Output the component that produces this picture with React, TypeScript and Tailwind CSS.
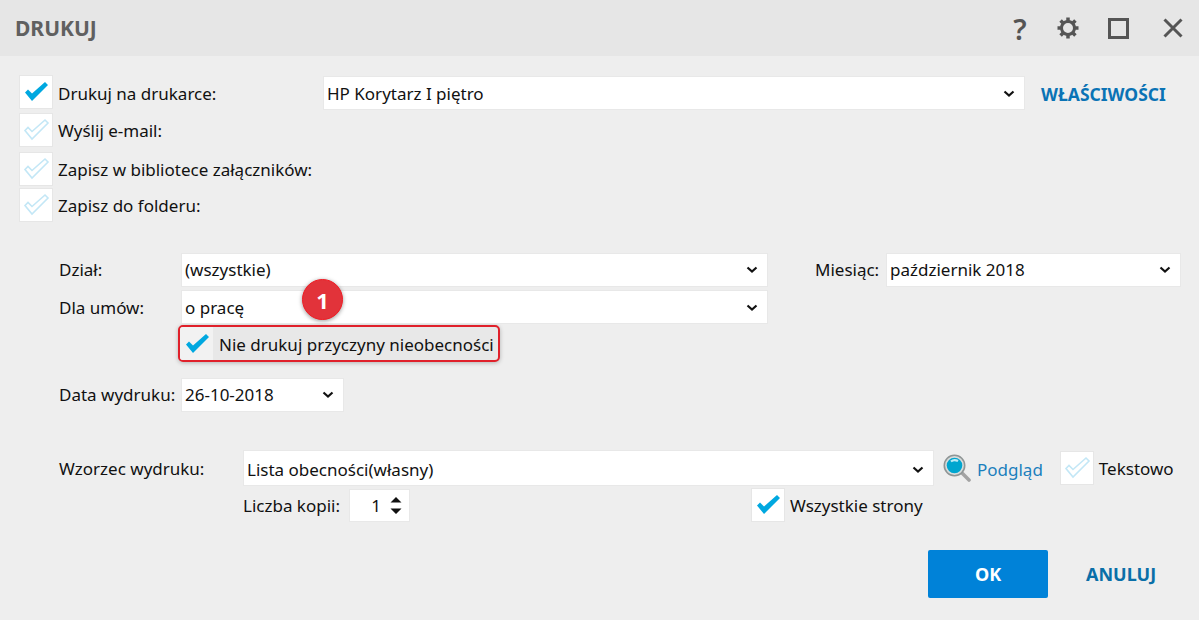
const font = "font-['Noto_Sans','Open_Sans',sans-serif]";

function Check({ on }: { on?: boolean }) {
  return (
    <svg width="32" height="32" viewBox="0 0 32 32">
      {on ? (
        <path d="M5 16.5 8 13.5 12 17.5 25 6 28 9 12 25Z" fill="#00a8e0" />
      ) : (
        <path d="M5 16.5 8 13.5 12 17.5 25 6 28 9 12 25Z" fill="none" stroke="#c3e7f6" strokeWidth="1.6" />
      )}
    </svg>
  );
}

function CheckBox({ on }: { on?: boolean }) {
  return (
    <div className="w-[34px] h-[34px] shrink-0 bg-white border border-[#e6e6e6] flex items-center justify-center">
      <Check on={on} />
    </div>
  );
}

function Chevron() {
  return (
    <svg width="12" height="8" viewBox="0 0 12 8" className="shrink-0">
      <path d="M1.500 1.500 6 5.500 10.500 1.500" fill="none" stroke="#111" strokeWidth="2.200" />
    </svg>
  );
}

function Select({ value, className }: { value: string; className: string }) {
  return (
    <div className={"h-[34px] bg-white border border-[#e8e8e8] flex items-center justify-between pl-[3px] pr-[9px] text-[#111] " + className}>
      <span>{value}</span>
      <Chevron />
    </div>
  );
}

function CheckRow({ label, on, className }: { label: string; on?: boolean; className: string }) {
  return (
    <div className={"flex items-center gap-[5px] " + className}>
      <CheckBox on={on} />
      <span className="pt-[2px]">{label}</span>
    </div>
  );
}

function Gear() {
  const teeth = [0, 45, 90, 135];
  return (
    <svg width="24" height="24" viewBox="0 0 24 24">
      <circle cx="12" cy="12" r="6.5" fill="none" stroke="#555" strokeWidth="3" />
      {teeth.map((a) => (
        <path key={a} d="M12 1.5V22.5" stroke="#555" strokeWidth="3.5" strokeDasharray="3.5 14 3.5" transform={`rotate(${a} 12 12)`} />
      ))}
    </svg>
  );
}

function Magnifier() {
  return (
    <svg width="28" height="28" viewBox="0 0 28 28">
      <path d="M18 18 26 26" stroke="#a3a3a3" strokeWidth="3.6" strokeLinecap="round" />
      <circle cx="11.500" cy="11.500" r="10.200" fill="#d8dcdc" stroke="#8f9595" strokeWidth="1.600" />
      <circle cx="11.500" cy="11.500" r="7.800" fill="#00a5cf" />
      <path d="M8 7.500Q11 4.800 15 7" fill="none" stroke="#bdeaf5" strokeWidth="2.200" />
    </svg>
  );
}

export default function App() {
  return (
    <div className={"w-[1199px] h-[620px] bg-[#eeeeee] overflow-hidden text-[17px] leading-[22px] text-[#111] " + font}>
      <header className="h-[56px] bg-[#e6e6e6] flex items-center pl-[15px] pr-[16px]">
        <h1 className="text-[21px] font-bold text-[#606060]">DRUKUJ</h1>
        <div className="ml-auto flex items-center">
          <span className="w-[24px] text-center text-[29px] leading-none font-semibold text-[#555] mr-[24px]">?</span>
          <div className="mr-[28px]"><Gear /></div>
          <div className="w-[21px] h-[21px] border-[3px] border-[#555] mr-[34px]" />
          <svg width="20" height="20" viewBox="0 0 20 20">
            <path d="M1.500 1.500 18.500 18.500M18.500 1.500 1.500 18.500" stroke="#555" strokeWidth="3" />
          </svg>
        </div>
      </header>

      <main className="relative pl-[19px] pt-[19px]">
        <div className="flex items-start">
          <div className="w-[304px] flex items-center gap-[5px]">
            <CheckBox on />
            <span className="pt-[4px]">Drukuj na drukarce:</span>
          </div>
          <Select value="HP Korytarz I piętro" className="w-[702px] mt-px pt-[2px]" />
          <a className="ml-[16px] mt-[8px] text-[17.500px] font-bold text-[#0a73b5]">WŁAŚCIWOŚCI</a>
        </div>
        <CheckRow label="Wyślij e-mail:" className="mt-[3px]" />
        <CheckRow label="Zapisz w bibliotece załączników:" className="mt-[5px]" />
        <CheckRow label="Zapisz do folderu:" className="mt-[2px]" />

        <div className="mt-[31px] pl-[40px] flex items-center">
          <span className="w-[122px]">Dział:</span>
          <Select value="(wszystkie)" className="w-[587px]" />
          <span className="ml-[47px] w-[71px]">Miesiąc:</span>
          <Select value="październik 2018" className="w-[295px]" />
        </div>
        <div className="mt-[3px] pl-[40px] flex items-center">
          <span className="w-[122px] pt-[2px]">Dla umów:</span>
          <Select value="o pracę" className="w-[587px] pt-[2px]" />
        </div>

        <div className="mt-px ml-[159px] w-[322px] h-[37px] border-2 border-[#e0202a] rounded-[5px] flex items-center bg-[#e8e8e8] shadow-[0_1px_4px_rgba(0,0,0,0.25)] overflow-hidden">
          <div className="w-[33px] h-full bg-[#f2f2f2] flex items-center justify-center shrink-0">
            <Check on />
          </div>
          <span className="ml-[6px] pt-[2px] whitespace-nowrap">Nie drukuj przyczyny nieobecności</span>
        </div>

        <div className="mt-[16px] pl-[40px] flex items-center">
          <span className="w-[122px]">Data wydruku:</span>
          <Select value="26-10-2018" className="w-[163px]" />
        </div>

        <div className="mt-[38px] pl-[40px] flex items-center">
          <span className="w-[184px] pt-[2px]">Wzorzec wydruku:</span>
          <Select value="Lista obecności(własny)" className="w-[691px] !h-[36px] pt-[3px]" />
          <div className="ml-[9px]"><Magnifier /></div>
          <a className="ml-[6px] pt-[3px] text-[#1b80bd]">Podgląd</a>
          <div className="ml-[17px]"><CheckBox /></div>
          <span className="ml-[5px] pt-[2px]">Tekstowo</span>
        </div>
        <div className="mt-[2px] pl-[224px] flex items-center">
          <span className="w-[106px] pt-[2px]">Liczba kopii:</span>
          <div className="w-[61px] h-[33px] bg-white border border-[#e8e8e8] flex items-center justify-end pr-[7px] gap-[9px]">
            <span className="pt-[2px]">1</span>
            <svg width="12" height="20" viewBox="0 0 12 20">
              <path d="M6 2 11.500 7.500H.500ZM.500 13.500H11.500L6 19Z" fill="#111" />
            </svg>
          </div>
          <CheckRow on label="Wszystkie strony" className="ml-[341px]" />
        </div>

        <div className="mt-[28px] flex items-center">
          <button className="ml-[909px] w-[120px] h-[48px] bg-[#0082d8] rounded-[2px] text-[18px] text-white font-bold">OK</button>
          <button className="ml-[38px] text-[18px] font-bold text-[#0a6fa8]">ANULUJ</button>
        </div>

        <div className="absolute left-[302px] top-[223px] w-[41px] h-[41px] rounded-full bg-[#e2333a] border border-[#f01c24] shadow-[0_1px_4px_rgba(0,0,0,0.4)] flex items-center justify-center text-white font-bold text-[22px]">
          1
        </div>
      </main>
    </div>
  );
}
